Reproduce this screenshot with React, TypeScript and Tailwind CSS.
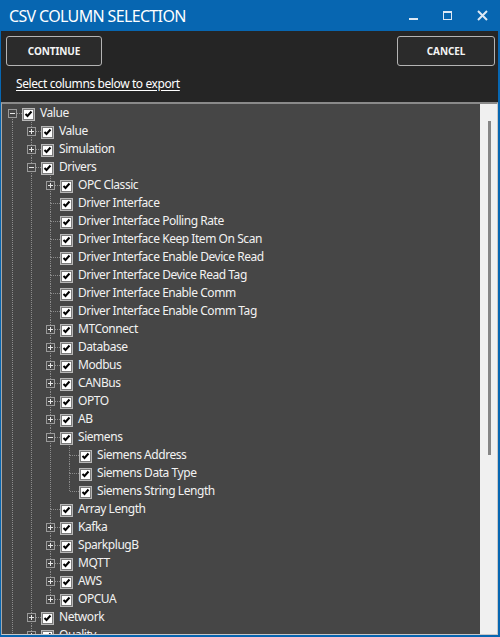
import React from 'react';

type Row = [number, string, '' | '+' | '-'];

const rows: Row[] = [
  [0, 'Value', '-'],
  [1, 'Value', '+'],
  [1, 'Simulation', '+'],
  [1, 'Drivers', '-'],
  [2, 'OPC Classic', '+'],
  [2, 'Driver Interface', ''],
  [2, 'Driver Interface Polling Rate', ''],
  [2, 'Driver Interface Keep Item On Scan', ''],
  [2, 'Driver Interface Enable Device Read', ''],
  [2, 'Driver Interface Device Read Tag', ''],
  [2, 'Driver Interface Enable Comm', ''],
  [2, 'Driver Interface Enable Comm Tag', ''],
  [2, 'MTConnect', '+'],
  [2, 'Database', '+'],
  [2, 'Modbus', '+'],
  [2, 'CANBus', '+'],
  [2, 'OPTO', '+'],
  [2, 'AB', '+'],
  [2, 'Siemens', '-'],
  [3, 'Siemens Address', ''],
  [3, 'Siemens Data Type', ''],
  [3, 'Siemens String Length', ''],
  [2, 'Array Length', ''],
  [2, 'Kafka', '+'],
  [2, 'SparkplugB', '+'],
  [2, 'MQTT', '+'],
  [2, 'AWS', '+'],
  [2, 'OPCUA', '+'],
  [1, 'Network', '+'],
  [1, 'Quality', '+'],
];

// does row i have a later sibling (rows past the end are assumed to continue)
const hasNext = rows.map(([d], i) => {
  for (let j = i + 1; j < rows.length; j++) {
    if (rows[j][0] < d) return false;
    if (rows[j][0] === d) return true;
  }
  return true;
});

const ancestorLines = rows.map(([d], i) => {
  const out: boolean[] = [];
  for (let k = 0; k < d; k++) {
    let idx = -1;
    for (let j = i - 1; j >= 0; j--) {
      if (rows[j][0] === k) {
        idx = j;
        break;
      }
    }
    out.push(idx >= 0 ? hasNext[idx] : false);
  }
  return out;
});

const LINE = '#8c8c8c';

function Lines({ i }: { i: number }) {
  const [d, , exp] = rows[i];
  const w = 20 + 19 * d;
  const cx = 10 + 19 * d + 0.5;
  return (
    <svg width={w} height={18} className="shrink-0" shapeRendering="crispEdges">
      {ancestorLines[i].map((on, k) =>
        on ? (
          <line key={k} x1={10 + 19 * k + 0.5} y1={0} x2={10 + 19 * k + 0.5} y2={18} stroke={LINE} strokeDasharray="1 1" />
        ) : null
      )}
      {i > 0 && <line x1={cx} y1={0} x2={cx} y2={9} stroke={LINE} strokeDasharray="1 1" />}
      {hasNext[i] && <line x1={cx} y1={9} x2={cx} y2={18} stroke={LINE} strokeDasharray="1 1" />}
      <line x1={cx} y1={9.5} x2={w} y2={9.5} stroke={LINE} strokeDasharray="1 1" />
      {exp && (
        <g>
          <rect x={cx - 4} y={5.5} width={8} height={8} fill="#464646" stroke="#9a9a9a" />
          <line x1={cx - 2.5} y1={9.5} x2={cx + 2.5} y2={9.5} stroke="#e8e8e8" />
          {exp === '+' && <line x1={cx} y1={7} x2={cx} y2={12} stroke="#e8e8e8" />}
        </g>
      )}
    </svg>
  );
}

function Check() {
  return (
    <svg width={13} height={18} className="shrink-0" shapeRendering="crispEdges">
      <rect x={0.5} y={4.5} width={12} height={12} fill="#ffffff" stroke="#b8b8b8" />
      <rect x={1.5} y={5.5} width={10} height={10} fill="#ffffff" stroke="#7a7a7a" />
      <path d="M3.5 10 L5.5 12 L9.5 7.5" fill="none" stroke="#000" strokeWidth={2} shapeRendering="auto" />
    </svg>
  );
}

export default function App() {
  return (
    <div
      className="w-[500px] h-[637px] bg-[#0766b1] flex flex-col pl-[1px] pr-[2px] pb-[2px] overflow-hidden"
      style={{ fontFamily: '"Noto Sans", "Open Sans", sans-serif' }}
    >
      {/* title bar */}
      <div className="h-[31px] shrink-0 flex items-center pl-[8px] text-white">
        <span className="text-[16px] leading-none tracking-[-0.65px]">CSV COLUMN SELECTION</span>
        <div className="ml-auto flex items-center h-full">
          <svg width={20} height={31} className="mr-[14px]" shapeRendering="crispEdges">
            <rect x={4} y={18} width={9} height={2} fill="#dde8f4" />
          </svg>
          <svg width={20} height={31} className="mr-[14px]" shapeRendering="crispEdges">
            <rect x={4.5} y={11.5} width={8} height={8} fill="none" stroke="#dde8f4" />
            <rect x={4} y={11} width={9} height={2} fill="#dde8f4" />
          </svg>
          <svg width={20} height={31} className="mr-[5px]">
            <path d="M5 11 L14 20 M14 11 L5 20" stroke="#dde8f4" strokeWidth={2} />
          </svg>
        </div>
      </div>

      {/* header panel */}
      <div className="h-[71px] shrink-0 bg-[#252525] flex flex-col">
        <div className="flex justify-between pt-[5px] pl-[5px] pr-[3px]">
          <button className="w-[96px] h-[30px] rounded-[3px] border border-[#b4b4b4] bg-[#2b2b2b] text-[#f4f4f4] text-[10px] font-bold tracking-[-0.1px]">
            CONTINUE
          </button>
          <button className="w-[98px] h-[30px] rounded-[3px] border border-[#b4b4b4] bg-[#2b2b2b] text-[#f4f4f4] text-[10px] font-bold tracking-[-0.1px]">
            CANCEL
          </button>
        </div>
        <div className="pl-[15px] mt-[10px] text-[12px] leading-[16px] tracking-[-0.4px] text-white underline underline-offset-[2px]">
          Select columns below to export
        </div>
      </div>

      {/* tree */}
      <div className="flex-1 min-h-0 flex border-t-2 border-[#8a8a8a] border-l border-b border-b-[#c8c8c8] border-l-[#a8a8a8] border-r border-r-[#c8c8c8]">
        <div className="flex-1 bg-[#464646] overflow-hidden">
          {rows.map(([d, label], i) => (
            <div key={i} className="flex items-center h-[18px]">
              <Lines i={i} />
              <Check />
              <span className="ml-[5px] text-[12px] leading-[18px] tracking-[-0.45px] text-[#f2f2f2] whitespace-nowrap">{label}</span>
            </div>
          ))}
        </div>
        <div className="w-[17px] shrink-0 bg-[#f0f0f0] flex justify-center pt-[17px]">
          <div className="w-[3px] h-[334px] bg-[#868686] ml-[1px]" />
        </div>
      </div>
    </div>
  );
}
